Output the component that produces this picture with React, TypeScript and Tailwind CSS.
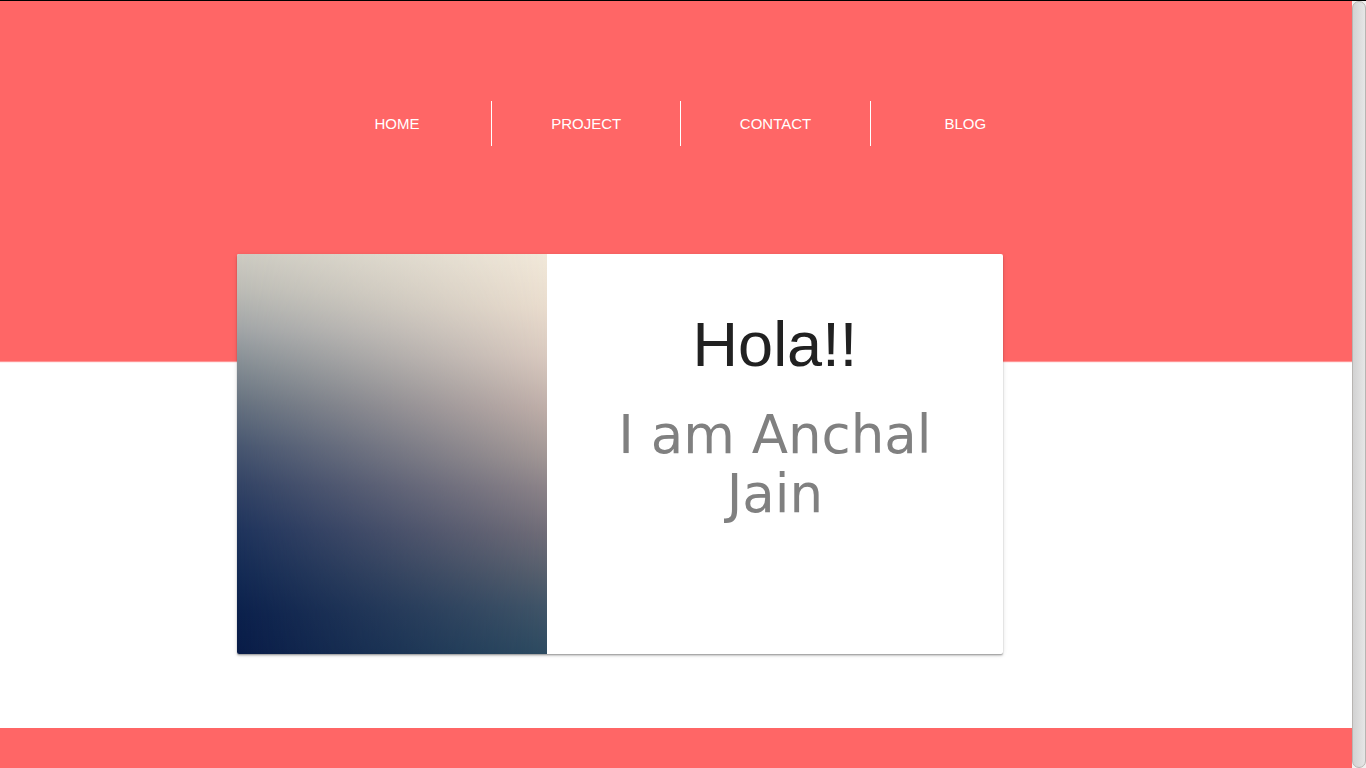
const links = ["Home", "Project", "Contact", "Blog"];

function Nav() {
  return (
    <nav className="ml-[22.4%] w-[56%] pt-[100px]" aria-label="Main">
      <ul className="flex divide-x divide-white">
        {links.map((link) => (
          <li key={link} className="w-1/4">
            <a
              href={`#${link.toLowerCase()}`}
              className="block text-center text-[15px] leading-[45px] text-white uppercase"
            >
              {link}
            </a>
          </li>
        ))}
      </ul>
    </nav>
  );
}

function Cover() {
  return (
    <div className="grid w-[310px] shrink-0 overflow-hidden rounded-l-xs">
      <div className="col-start-1 row-start-1 bg-[linear-gradient(to_bottom,#cdcbc2_0%,#bcbcb6_9%,#a1a5a7_19%,#838c93_28%,#64707f_38%,#485771_48%,#324365_58%,#1f345d_69%,#132a54_80%,#0b204c_90%,#091c48_100%)]" />
      <div className="col-start-1 row-start-1 bg-[linear-gradient(to_bottom,#f1e8d9_0%,#e9dccd_13%,#d8c8be_26%,#c0afa9_38%,#a39896_50%,#8d8489_58%,#6f6c77_70%,#565f6d_80%,#415568_88%,#2d4b61_100%)] [mask-image:linear-gradient(to_right,transparent,black)]" />
    </div>
  );
}

function IntroCard() {
  return (
    <section className="relative -mt-[107px] ml-[17.5%] flex min-h-[400px] w-[56.7%] rounded-xs bg-white shadow-[0_2px_2px_rgba(0,0,0,0.14),0_1px_5px_rgba(0,0,0,0.12),0_1px_1px_rgba(0,0,0,0.2)]">
      <Cover />
      <div className="flex-1 px-12 pt-[54px] text-center">
        <h1 className="text-[63px] leading-[72px] text-[#212121]">Hola!!</h1>
        <h2 className="mt-[25px] font-['DejaVu_Sans',sans-serif] text-[53px] leading-[59px] text-[#808080]">
          I am Anchal Jain
        </h2>
      </div>
    </section>
  );
}

export default function App() {
  return (
    <div className="flex h-screen flex-col overflow-hidden border-t border-black bg-white font-['Liberation_Sans',Arial,sans-serif]">
      <div className="flex min-h-0 flex-1">
        <main className="flex min-w-0 flex-1 flex-col">
          <header className="h-[360px] shrink-0 bg-[#ff6666] shadow-[0_1px_1px_rgba(255,102,102,0.7)]">
            <Nav />
          </header>
          <IntroCard />
          <footer className="mt-[74px] flex-1 bg-[#ff6666]" />
        </main>
        <div className="flex w-3.5 shrink-0 bg-[#f2f1f0]" aria-hidden="true">
          <div className="flex-1 rounded-full border border-[#b8b5b2] bg-linear-to-r from-[#d2d2d2] to-[#e6e6e6]" />
        </div>
      </div>
    </div>
  );
}
